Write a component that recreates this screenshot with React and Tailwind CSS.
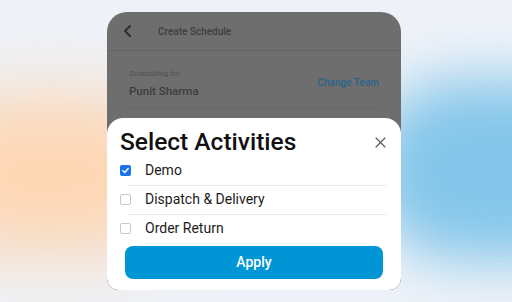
import React from 'react';

const activities = [
  { label: 'Demo', checked: true },
  { label: 'Dispatch & Delivery', checked: false },
  { label: 'Order Return', checked: false },
];

function Checkbox({ checked }) {
  if (checked) {
    return (
      <div className="w-[11px] h-[11px] rounded-[2px] bg-[#1a73e8] flex items-center justify-center shrink-0">
        <svg width="9" height="9" viewBox="0 0 10 10" fill="none">
          <path d="M2 5.2 L4.2 7.2 L8 2.8" stroke="white" strokeWidth="1.6" strokeLinecap="round" strokeLinejoin="round" />
        </svg>
      </div>
    );
  }
  return <div className="w-[11px] h-[11px] rounded-[2px] border border-[#c8c8c8] bg-white shrink-0" />;
}

export default function App() {
  return (
    <div className="relative w-[512px] h-[302px] overflow-hidden bg-[#eef2f8]" style={{ fontFamily: 'Roboto, "Noto Sans", sans-serif' }}>
      <div className="absolute left-[-80px] top-[95px] w-[260px] h-[160px] rounded-full bg-[#fdd6b4] blur-[35px]" />
      <div className="absolute left-[370px] top-[80px] w-[260px] h-[180px] rounded-full bg-[#84c6ea] blur-[28px]" />

      <div className="relative ml-[107px] mt-[12px] w-[294px] h-[278px] rounded-t-[20px] rounded-b-[12px] bg-[#6e6e6e] overflow-hidden flex flex-col">
        <div className="h-[39px] flex items-center border-b border-[#626262] shrink-0">
          <svg className="ml-[16px]" width="9" height="12" viewBox="0 0 9 12" fill="none">
            <path d="M7 1 L2 6 L7 11" stroke="#2f2f2f" strokeWidth="2" strokeLinecap="round" strokeLinejoin="round" />
          </svg>
          <span className="ml-[26px] text-[10px] font-medium text-[#3e3e3e]">Create Schedule</span>
        </div>

        <div className="mx-[22px] h-[57px] border-b border-[#666666] flex items-center justify-between shrink-0">
          <div className="flex flex-col mt-[8px]">
            <span className="text-[8px] leading-[10px] text-[#505050]">Scheduling for</span>
            <span className="text-[11.5px] leading-[14px] mt-[5px] text-[#3d3d3d] font-medium">Punit Sharma</span>
          </div>
          <span className="text-[10px] font-semibold text-[#2e6585] mt-[6px]">Change Team</span>
        </div>

        <div className="mt-[10px] flex-1 bg-white rounded-t-[16px] rounded-b-[12px] px-[13px] pt-[9px] flex flex-col">
          <div className="flex items-center justify-between h-[30px]">
            <span className="text-[24.5px] leading-[30px] font-medium text-[#111111]">Select Activities</span>
            <svg className="mr-[2px]" width="11" height="11" viewBox="0 0 11 11" fill="none">
              <path d="M1 1 L10 10 M10 1 L1 10" stroke="#555555" strokeWidth="1.1" strokeLinecap="round" />
            </svg>
          </div>
          <div className="flex flex-col">
            {activities.map((a, i) => (
              <div key={a.label}>
                <div className="h-[27px] flex items-center">
                  <Checkbox checked={a.checked} />
                  <span className="ml-[14px] text-[14px] text-[#1c1c1c]">{a.label}</span>
                </div>
                {i < activities.length - 1 ? <div className="ml-[7px] mr-[1px] h-px bg-[#ebebeb] mt-[1px]" /> : null}
              </div>
            ))}
          </div>
          <button className="mt-[4px] mx-[5px] h-[33px] rounded-lg bg-[#0096d6] text-white text-[14px] font-medium">
            Apply
          </button>
        </div>
      </div>
    </div>
  );
}
